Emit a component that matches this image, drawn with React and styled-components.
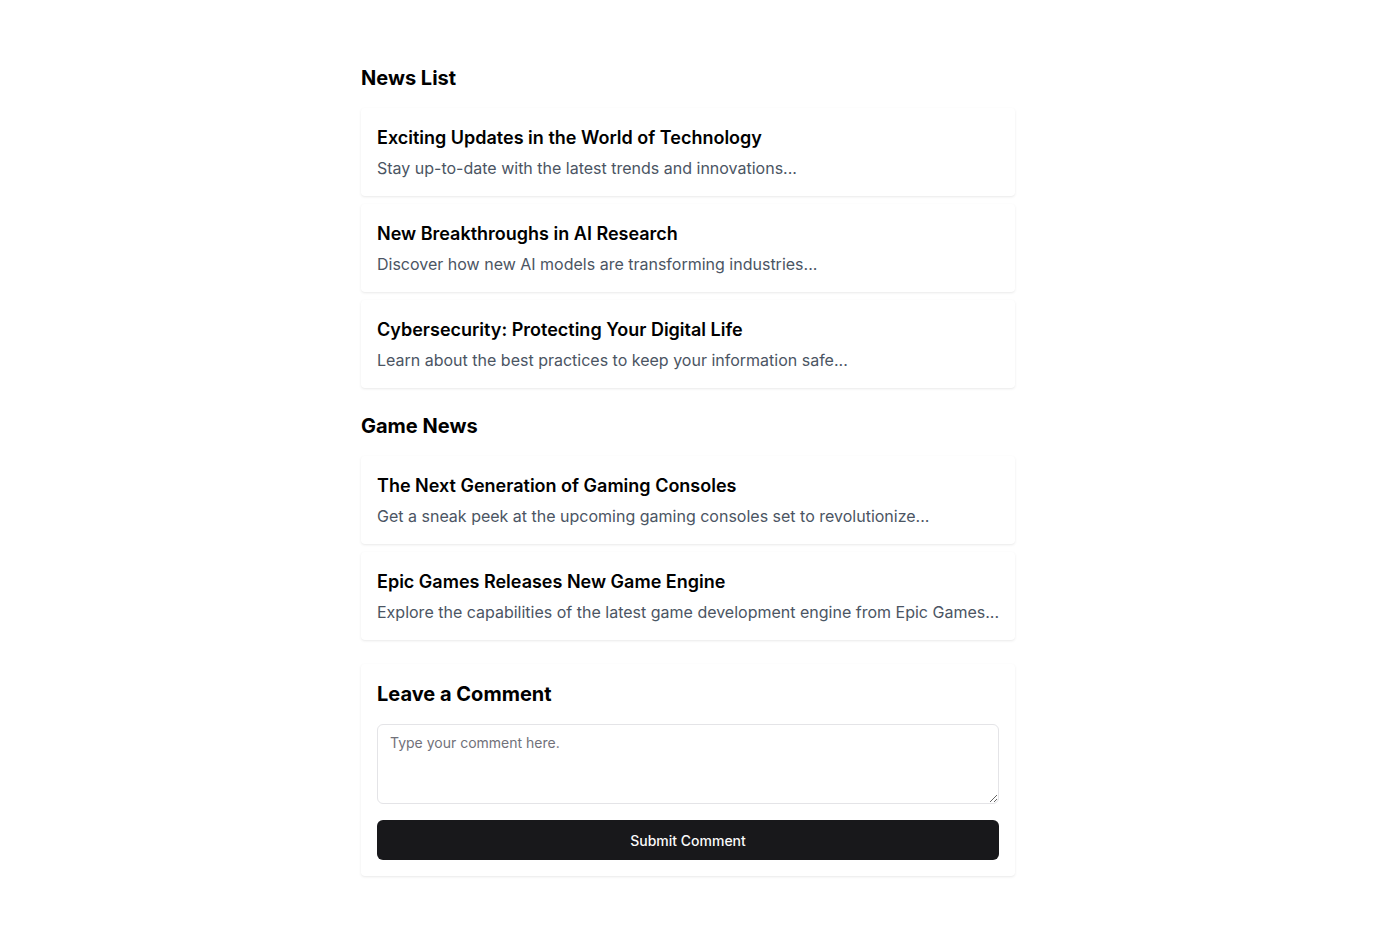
import styled, { createGlobalStyle } from 'styled-components';

const GlobalStyle = createGlobalStyle`
  * {
    box-sizing: border-box;
  }
  body {
    margin: 0;
    background: #ffffff;
    font-family: Inter, "Liberation Sans", sans-serif;
    color: #09090b;
  }
`;

const newsItems = [
  {
    title: 'Exciting Updates in the World of Technology',
    desc: 'Stay up-to-date with the latest trends and innovations...',
  },
  {
    title: 'New Breakthroughs in AI Research',
    desc: 'Discover how new AI models are transforming industries...',
  },
  {
    title: 'Cybersecurity: Protecting Your Digital Life',
    desc: 'Learn about the best practices to keep your information safe...',
  },
];

const gameItems = [
  {
    title: 'The Next Generation of Gaming Consoles',
    desc: 'Get a sneak peek at the upcoming gaming consoles set to revolutionize...',
  },
  {
    title: 'Epic Games Releases New Game Engine',
    desc: 'Explore the capabilities of the latest game development engine from Epic Games...',
  },
];

const NewsCard = ({ title, desc }) => {
  return (
    <Card>
      <CardTitle>{title}</CardTitle>
      <CardDesc>{desc}</CardDesc>
    </Card>
  );
};

const App = () => {
  return (
    <>
      <GlobalStyle />
      <Page>
        <Container>
          <Section>
            <SectionTitle>News List</SectionTitle>
            <CardList>
              {newsItems.map((item) => (
                <NewsCard key={item.title} {...item} />
              ))}
            </CardList>
          </Section>
          <Section>
            <SectionTitle>Game News</SectionTitle>
            <CardList>
              {gameItems.map((item) => (
                <NewsCard key={item.title} {...item} />
              ))}
            </CardList>
          </Section>
          <CommentCard>
            <CommentTitle>Leave a Comment</CommentTitle>
            <CommentInput placeholder="Type your comment here." />
            <SubmitBtn type="button">Submit Comment</SubmitBtn>
          </CommentCard>
        </Container>
      </Page>
    </>
  );
};

export default App;

const Page = styled.div`
  padding: 64px 0 48px;
  display: flex;
  justify-content: center;
`;

const Container = styled.div`
  width: 654px;
  display: flex;
  flex-direction: column;
  gap: 24px;
`;

const Section = styled.section`
  display: flex;
  flex-direction: column;
  gap: 16px;
`;

const SectionTitle = styled.h2`
  margin: 0;
  font-size: 20px;
  line-height: 28px;
  font-weight: 700;
  color: #000;
`;

const CardList = styled.div`
  display: flex;
  flex-direction: column;
  gap: 8px;
`;

const Card = styled.div`
  background: #fff;
  border-radius: 4px;
  padding: 16px;
  box-shadow: 0 1px 3px rgba(0, 0, 0, 0.08), 0 1px 2px -1px rgba(0, 0, 0, 0.06);
`;

const CardTitle = styled.h3`
  margin: 0 0 4px;
  font-size: 18px;
  line-height: 28px;
  font-weight: 600;
  color: #000;
`;

const CardDesc = styled.p`
  margin: 0;
  font-size: 16px;
  line-height: 24px;
  color: #4b5563;
`;

const CommentCard = styled(Card)`
  display: flex;
  flex-direction: column;
`;

const CommentTitle = styled.h3`
  margin: 0 0 16px;
  font-size: 20px;
  line-height: 28px;
  font-weight: 700;
  color: #000;
`;

const CommentInput = styled.textarea`
  height: 80px;
  width: 100%;
  border: 1px solid #e4e4e7;
  border-radius: 6px;
  padding: 8px 12px;
  font-family: Inter, "Liberation Sans", sans-serif;
  font-size: 14px;
  line-height: 20px;
  color: #09090b;
  resize: vertical;
  outline: none;

  &::placeholder {
    color: #71717a;
  }
`;

const SubmitBtn = styled.button`
  margin-top: 16px;
  height: 40px;
  width: 100%;
  border: none;
  border-radius: 6px;
  background: #18181b;
  color: #fafafa;
  font-family: Inter, "Liberation Sans", sans-serif;
  font-size: 14px;
  font-weight: 500;
  cursor: pointer;
`;
